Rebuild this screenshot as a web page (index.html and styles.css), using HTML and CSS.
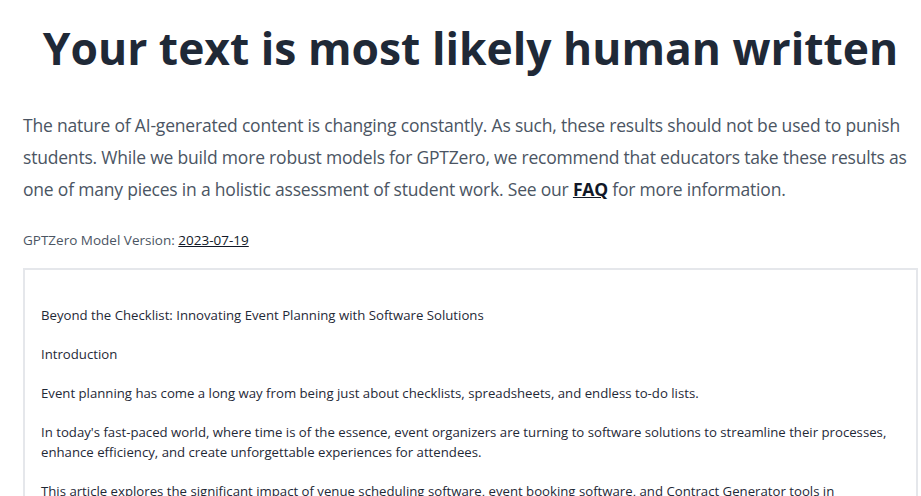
FILE: index.html
```html
<!DOCTYPE html>
<html lang="en">
<head>
    <meta charset="UTF-8">
    <meta name="viewport" content="width=device-width, initial-scale=1.0">
    <title>GPTZero Results</title>
    <link rel="stylesheet" href="styles.css">
</head>
<body>
    <div class="container">
        <h1 class="result-title">Your text is most likely human written</h1>

        <p class="disclaimer">
            The nature of AI-generated content is changing constantly. As such, these results should not be used to punish
            students. While we build more robust models for GPTZero, we recommend that educators take these results as
            one of many pieces in a holistic assessment of student work. See our <a href="#">FAQ</a> for more information.
        </p>

        <p class="version">GPTZero Model Version: <a href="#">2023-07-19</a></p>

        <div class="document">
            <p>Beyond the Checklist: Innovating Event Planning with Software Solutions</p>
            <p>Introduction</p>
            <p>Event planning has come a long way from being just about checklists, spreadsheets, and endless to-do lists.</p>
            <p>In today's fast-paced world, where time is of the essence, event organizers are turning to software solutions to streamline their processes, enhance efficiency, and create unforgettable experiences for attendees.</p>
            <p>This article explores the significant impact of venue scheduling software, event booking software, and Contract Generator tools in revolutionizing the event planning industry.</p>
        </div>
    </div>
</body>
</html>
```

FILE: styles.css
```css
body {
    margin: 0;
    font-family: 'Open Sans', 'Noto Sans', sans-serif;
    background-color: #fff;
    color: #1f2937;
}

.container {
    width: 895px;
    margin-left: 23px;
}

.result-title {
    margin: 18px 0 0;
    text-align: center;
    font-size: 44.4px;
    font-weight: 700;
    line-height: 60px;
    color: #1f2937;
}

.disclaimer {
    margin: 31px 0 0;
    font-size: 17.5px;
    letter-spacing: -0.2px;
    line-height: 32px;
    color: #4b5563;
}

.disclaimer a,
.version a {
    color: #111827;
    font-weight: 700;
    text-decoration: underline;
}

.version {
    margin: 25px 0 0;
    font-size: 13.5px;
    line-height: 20px;
    color: #4b5563;
}

.version a {
    font-weight: 400;
}

.document {
    margin-top: 18px;
    border: 2px solid #e5e7eb;
    padding: 35px 16px 0;
    height: 300px;
    overflow: hidden;
}

.document p {
    margin: 0 0 19px;
    font-size: 13.2px;
    line-height: 20px;
    color: #1f2937;
}
```
